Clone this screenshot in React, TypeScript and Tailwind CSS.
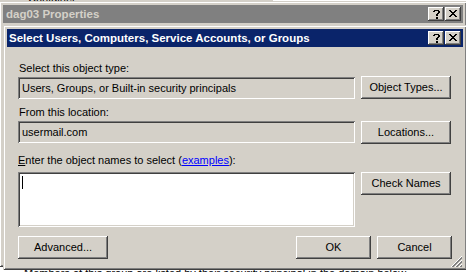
import React from "react";

function XGlyph() {
  const rows = [
    "xx....xx",
    ".xx..xx.",
    "..xxxx..",
    "...xx...",
    "..xxxx..",
    ".xx..xx.",
    "xx....xx",
  ];
  const rects: React.ReactElement[] = [];
  rows.forEach((r, y) =>
    r.split("").forEach((c, x) => {
      if (c === "x") rects.push(<rect key={`${x}-${y}`} x={x} y={y} width={1} height={1} fill="#000" />);
    })
  );
  return (
    <svg width="8" height="7" viewBox="0 0 8 7" shapeRendering="crispEdges">
      {rects}
    </svg>
  );
}

function QGlyph() {
  const rows = [
    ".xxxxx..",
    "xx...xx.",
    ".....xx.",
    "....xx..",
    "...xx...",
    "...xx...",
    "........",
    "...xx...",
    "...xx...",
  ];
  const rects: React.ReactElement[] = [];
  rows.forEach((r, y) =>
    r.split("").forEach((c, x) => {
      if (c === "x") rects.push(<rect key={`${x}-${y}`} x={x} y={y} width={1} height={1} fill="#000" />);
    })
  );
  return (
    <svg width="8" height="9" viewBox="0 0 8 9" shapeRendering="crispEdges">
      {rects}
    </svg>
  );
}

function CapButton({ kind }: { kind: "help" | "close" }) {
  return (
    <div className="flex h-[14px] w-[16px] items-center justify-center bg-[#d4d0c8] shadow-[inset_-1px_-1px_0_#404040,inset_1px_1px_0_#ffffff,inset_-2px_-2px_0_#808080]">
      <div className={kind === "help" ? "ml-[1px] mt-[0px]" : "ml-[-1px] mt-[-1px]"}>
        {kind === "help" ? <QGlyph /> : <XGlyph />}
      </div>
    </div>
  );
}

function Btn({ children, w }: { children: React.ReactNode; w: string }) {
  return (
    <div
      className={`flex h-[23px] shrink-0 items-center justify-center bg-[#d4d0c8] pb-[1px] text-[11px] leading-[13px] text-black shadow-[inset_-1px_-1px_0_#404040,inset_1px_1px_0_#ffffff,inset_-2px_-2px_0_#808080] ${w}`}
    >
      {children}
    </div>
  );
}

const sunken =
  "shadow-[inset_1px_1px_0_#808080,inset_-1px_-1px_0_#ffffff,inset_2px_2px_0_#404040,inset_-2px_-2px_0_#d4d0c8]";

export default function App() {
  return (
    <div className="relative h-[272px] w-[466px] overflow-hidden bg-white font-['Liberation_Sans',Arial,sans-serif] text-[11px] leading-[13px] text-black">
      {/* background app bits */}
      <div className="absolute left-0 top-0 h-[6px] w-[273px] bg-[#d4d0c8]" />
      <div className="absolute left-[28px] top-[-8px] text-[11px] text-black">Container</div>
      <div className="absolute left-[273px] top-[3px] h-[1px] w-[193px] bg-[#808080]" />
      <div className="absolute left-[24px] top-[267px] whitespace-nowrap text-[11px] text-black">
        Members of this group are listed by their security principal in the domain below.
      </div>

      {/* outer window */}
      <div className="absolute left-[-1px] top-[1px] h-[266px] w-[468px] bg-[#d4d0c8] p-[4px] shadow-[inset_1px_1px_0_#d4d0c8,inset_-1px_-1px_0_#404040,inset_2px_2px_0_#ffffff,inset_-2px_-2px_0_#808080]">
        <div className="flex h-[18px] items-center justify-between bg-[#808080] pl-[3px] pr-[2px]">
          <span className="text-[11.5px] font-bold text-[#d4d0c8]">dag03 Properties</span>
          <div className="flex gap-[1px]">
            <CapButton kind="help" />
            <CapButton kind="close" />
          </div>
        </div>
      </div>

      {/* inner dialog */}
      <div className="absolute left-[3px] top-[25px] h-[245px] w-[464px] bg-[#d4d0c8] p-[4px] shadow-[inset_1px_1px_0_#d4d0c8,inset_-1px_-1px_0_#404040,inset_2px_2px_0_#ffffff,inset_-2px_-2px_0_#808080]">
        <div className="flex h-[18px] items-center justify-between bg-[#0a246a] pl-[2px] pr-[2px]">
          <span className="text-[11.5px] font-bold text-white">
            Select Users, Computers, Service Accounts, or Groups
          </span>
          <div className="flex gap-[1px]">
            <CapButton kind="help" />
            <CapButton kind="close" />
          </div>
        </div>

        <div className="relative flex flex-col pl-[11px]">
          <div className="mt-[15px] h-[13px] pl-[1px]">Select this object type:</div>
          <div className="mt-[1px] flex items-start">
            <div className={`mt-[1px] flex h-[22px] w-[337px] items-center bg-[#d4d0c8] pl-[4px] ${sunken}`}>
              Users, Groups, or Built-in security principals
            </div>
            <div className="ml-[6px]">
              <Btn w="w-[90px]">Object Types...</Btn>
            </div>
          </div>

          <div className="mt-[7px] h-[13px] pl-[1px]">From this location:</div>
          <div className="mt-[2px] flex items-start">
            <div className={`flex h-[22px] w-[337px] items-center bg-[#d4d0c8] pl-[4px] ${sunken}`}>
              usermail.com
            </div>
            <div className="ml-[6px]">
              <Btn w="w-[90px]">Locations...</Btn>
            </div>
          </div>

          <div className="mt-[10px] h-[13px]">
            <span className="underline">E</span>nter the object names to select (
            <span className="text-[#0000ff] underline">examples</span>):
          </div>
          <div className="mt-[5px] flex items-start">
            <div className={`h-[55px] w-[337px] bg-white pl-[4px] pt-[4px] ${sunken}`}>
              <div className="h-[13px] w-[1px] bg-black" />
            </div>
            <div className="ml-[6px]">
              <Btn w="w-[90px]">Check Names</Btn>
            </div>
          </div>

          <div className="mt-[9px] flex items-start">
            <Btn w="w-[90px]">Advanced...</Btn>
            <div className="ml-auto mr-[11px] flex gap-[6px]">
              <Btn w="w-[75px]">OK</Btn>
              <Btn w="w-[75px]">Cancel</Btn>
            </div>
          </div>
        </div>

        {/* resize grip */}
        <svg
          className="absolute bottom-[3px] right-[5px]"
          width="12"
          height="12"
          viewBox="0 0 12 12"
          shapeRendering="crispEdges"
        >
          {[0, 4, 8].map((o) => (
            <g key={o}>
              <line x1={o + 1} y1={12} x2={12} y2={o + 1} stroke="#ffffff" strokeWidth={1} />
              <line x1={o + 2} y1={12} x2={12} y2={o + 2} stroke="#808080" strokeWidth={1} />
              <line x1={o + 3} y1={12} x2={12} y2={o + 3} stroke="#808080" strokeWidth={1} />
            </g>
          ))}
        </svg>
      </div>
    </div>
  );
}
